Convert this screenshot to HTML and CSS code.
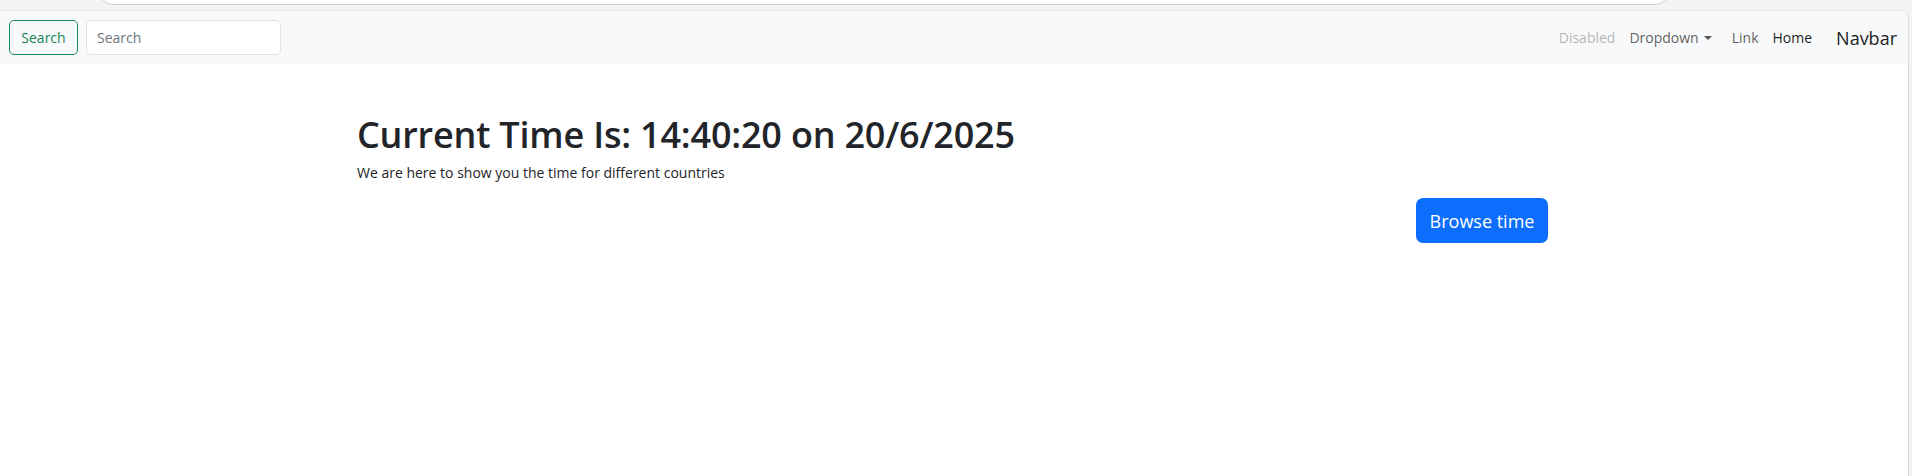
FILE: index.html
```html
<!DOCTYPE html>
<html lang="en">
<head>
<meta charset="utf-8">
<title>Current Time</title>
<link rel="stylesheet" href="styles.css">
</head>
<body>
<div class="chrome"><div class="omnibox"></div></div>
<div class="viewport">
  <nav class="navbar">
    <form class="search">
      <button type="button" class="btn-search">Search</button>
      <input class="search-input" type="search" placeholder="Search">
    </form>
    <div class="nav-right">
      <ul class="nav">
        <li class="nav-link disabled">Disabled</li>
        <li class="nav-link dropdown">Dropdown<span class="caret"></span></li>
        <li class="nav-link">Link</li>
        <li class="nav-link active">Home</li>
      </ul>
      <a class="brand">Navbar</a>
    </div>
  </nav>
  <main class="hero">
    <h1 class="title">Current Time Is: 14:40:20 on 20/6/2025</h1>
    <p class="lead">We are here to show you the time for different countries</p>
    <div class="actions"><a class="btn-primary">Browse time</a></div>
  </main>
</div>
</body>
</html>
```
FILE: styles.css
```css
* { box-sizing: border-box; }
html, body { margin: 0; padding: 0; }
body {
  background: #f3f3f3;
  font-family: "Open Sans", "Noto Sans", sans-serif;
  color: #212529;
  width: 1912px;
  height: 476px;
  overflow: hidden;
}
.chrome {
  height: 10px;
  overflow: hidden;
}
.omnibox {
  margin-left: 98px;
  width: 1572px;
  height: 30px;
  margin-top: -25px;
  background: #fff;
  border: 1px solid #cfcfcf;
  border-radius: 16px;
}
.viewport {
  width: 1909px;
  height: 466px;
  background: #fff;
  border-top: 1px solid #e6e6e6;
  border-right: 1px solid #dcdcdc;
  border-top-right-radius: 9px;
  overflow: hidden;
}
.navbar {
  height: 53px;
  background: #f8f9fa;
  display: flex;
  align-items: center;
  justify-content: space-between;
  padding: 0 11px 0 9px;
}
.search {
  display: flex;
  align-items: center;
  gap: 8px;
  margin: 0;
}
.btn-search {
  height: 35px;
  width: 69px;
  padding: 0;
  border: 1px solid #198754;
  border-radius: 5px;
  background: transparent;
  color: #198754;
  font-family: inherit;
  font-size: 14px;
}
.search-input {
  height: 35px;
  width: 195px;
  border: 1px solid #dee2e6;
  border-radius: 5px;
  background: #fff;
  padding: 0 10px;
  font-family: inherit;
  font-size: 14px;
  color: #212529;
  outline: none;
}
.search-input::placeholder { color: #6c757d; }
.nav-right {
  display: flex;
  align-items: center;
}
.nav {
  display: flex;
  align-items: center;
  list-style: none;
  margin: 0;
  padding: 0;
}
.nav-link {
  font-size: 14px;
  padding: 0 7px;
  color: rgba(0,0,0,.65);
}
.nav-link.disabled { color: rgba(0,0,0,.3); }
.nav-link.active { color: rgba(0,0,0,.9); }
.dropdown { display: flex; align-items: center; margin-right: 6px; }
.caret {
  display: inline-block;
  margin-left: 5px;
  border-top: 4px solid rgba(0,0,0,.65);
  border-left: 4px solid transparent;
  border-right: 4px solid transparent;
}
.brand {
  margin-left: 17px;
  font-size: 18px;
  color: rgba(0,0,0,.9);
}
.hero {
  width: 1191px;
  margin: 0 0 0 357px;
  padding-top: 49px;
}
.title {
  margin: 0;
  font-size: 36px;
  font-weight: 600;
  letter-spacing: -0.2px;
  line-height: 1.2;
}
.lead {
  margin: 6px 0 0;
  font-size: 14px;
  line-height: 1.5;
}
.actions {
  display: flex;
  justify-content: flex-end;
  margin-top: 15px;
}
.btn-primary {
  display: inline-flex;
  align-items: center;
  justify-content: center;
  height: 45px;
  width: 132px;
  border-radius: 7px;
  background: #0d6efd;
  color: #fff;
  font-size: 18px;
}
```
